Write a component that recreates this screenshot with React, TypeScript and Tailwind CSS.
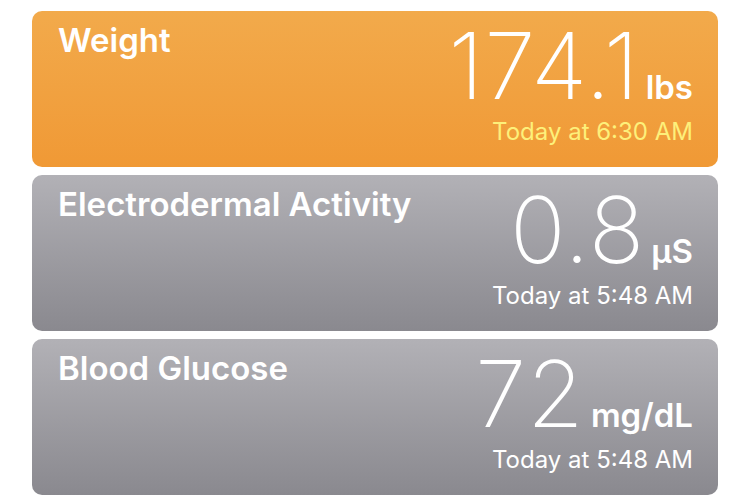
const rows = [
  { title: 'Weight', value: '174.1', unit: 'lbs', time: 'Today at 6:30 AM', tone: 'orange' },
  { title: 'Electrodermal Activity', value: '0.8', unit: 'μS', time: 'Today at 5:48 AM', tone: 'gray' },
  { title: 'Blood Glucose', value: '72', unit: 'mg/dL', time: 'Today at 5:48 AM', tone: 'gray' },
]

export default function App() {
  return (
    <div className="w-[750px] h-[504px] bg-white pt-[11px] pl-8 flex flex-col gap-2" style={{ fontFamily: 'Inter, "Liberation Sans", sans-serif' }}>
      {rows.map(r => (
        <div
          key={r.title}
          className={
            r.tone === 'orange'
              ? 'w-[686px] h-[156px] rounded-[10px] bg-gradient-to-b from-[#f2aa4b] to-[#f09935] flex justify-between text-white pl-[26px] pr-[25px]'
              : 'w-[686px] h-[156px] rounded-[10px] bg-gradient-to-b from-[#b2b1b6] to-[#8a898f] flex justify-between text-white pl-[26px] pr-[25px]'
          }
        >
          <div className="text-[33px] font-semibold leading-none pt-[13px]">{r.title}</div>
          <div className="flex flex-col items-end">
            <div className="flex items-baseline leading-none mt-[9px]">
              <span className="text-[92px] font-extralight tracking-[1px]">{r.value}</span>
              <span className="text-[33px] font-semibold ml-[6px]">{r.unit}</span>
            </div>
            <div className={r.tone === 'orange' ? 'text-[24px] leading-none mt-[8px] text-[#fdf07a]' : 'text-[24px] leading-none mt-[8px] text-white'}>
              {r.time}
            </div>
          </div>
        </div>
      ))}
    </div>
  )
}
